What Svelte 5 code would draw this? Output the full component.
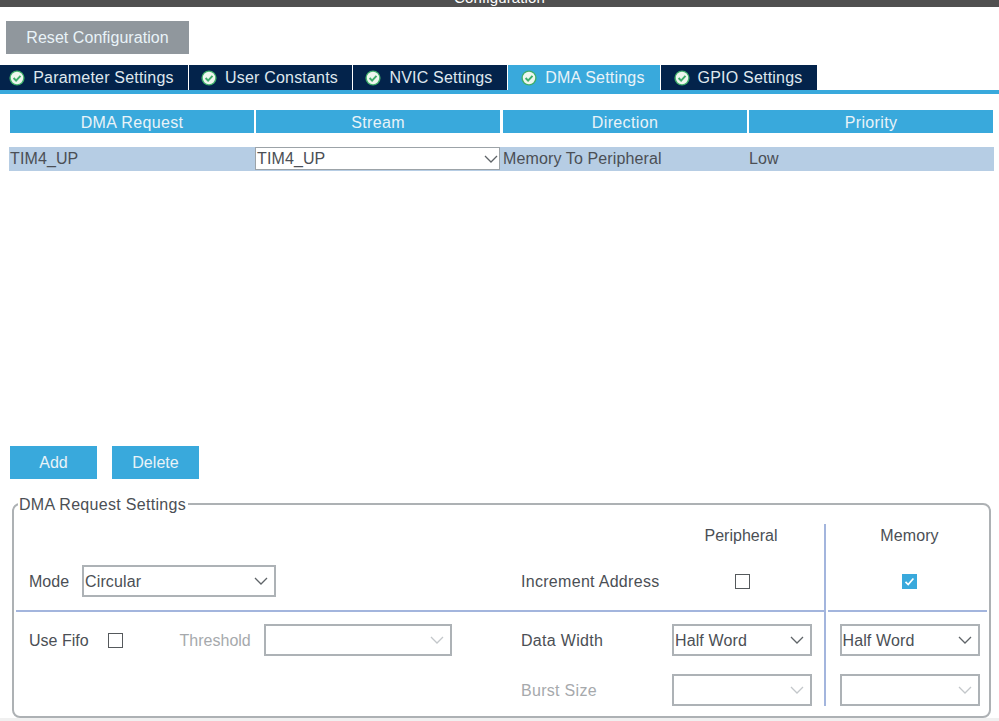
<script>
  const tabs = [
    { label: 'Parameter Settings', width: 188 },
    { label: 'User Constants', width: 163 },
    { label: 'NVIC Settings', width: 154 },
    { label: 'DMA Settings', width: 152, active: true },
    { label: 'GPIO Settings', width: 156 }
  ];
  const columns = ['DMA Request', 'Stream', 'Direction', 'Priority'];
</script>

{#snippet chevron()}
  <svg class="chevron" width="14" height="8" viewBox="0 0 14 8"><path d="M1 1l6 6 6-6" /></svg>
{/snippet}

{#snippet select(value, cls)}
  <div class="select {cls}">
    <span>{value}</span>
    {@render chevron()}
  </div>
{/snippet}

<div class="page">
  <div class="titlebar"><span>Configuration</span></div>

  <button class="reset">Reset Configuration</button>

  <div class="tabs">
    {#each tabs as tab}
      <div class="tab" class:active={tab.active} style="width: {tab.width}px">
        <svg class="ok" width="16" height="16" viewBox="0 0 16 16">
          <circle cx="8" cy="8" r="7.6" fill="#3fae6b" />
          <circle cx="8" cy="8" r="6.2" fill="#eef7ee" />
          <path d="M4.6 8l2.5 2.6 4.4-4.7" fill="none" stroke="#3fae6b" stroke-width="2" />
        </svg>
        <span>{tab.label}</span>
      </div>
    {/each}
  </div>

  <div class="table">
    <div class="thead">
      {#each columns as col}
        <div class="th">{col}</div>
      {/each}
    </div>
    <div class="row">
      <div class="td">TIM4_UP</div>
      <div class="td">{@render select('TIM4_UP', 'stream')}</div>
      <div class="td">Memory To Peripheral</div>
      <div class="td">Low</div>
    </div>
  </div>

  <div class="actions">
    <button class="action">Add</button>
    <button class="action">Delete</button>
  </div>

  <fieldset class="settings">
    <legend>DMA Request Settings</legend>
    <div class="cfg">
      <div class="cfg-main">
        <div class="upper">
          <div class="peripheral-head">Peripheral</div>
          <div class="line">
            <div class="side">
              <span class="lbl">Mode</span>
              {@render select('Circular', 'mode')}
            </div>
            <div class="side right">
              <span class="lbl wide">Increment Address</span>
              <div class="cell"><span class="check"></span></div>
            </div>
          </div>
        </div>
        <div class="lower">
          <div class="line">
            <div class="side">
              <span class="lbl fifo">Use Fifo</span>
              <span class="check"></span>
              <span class="lbl thr muted">Threshold</span>
              {@render select('', 'threshold off')}
            </div>
            <div class="side right">
              <span class="lbl wide">Data Width</span>
              <div class="cell">{@render select('Half Word', 'small')}</div>
            </div>
          </div>
          <div class="line">
            <div class="side"></div>
            <div class="side right">
              <span class="lbl wide muted">Burst Size</span>
              <div class="cell">{@render select('', 'small off')}</div>
            </div>
          </div>
        </div>
      </div>
      <div class="cfg-memory">
        <div class="upper">
          <div class="memory-head">Memory</div>
          <div class="line center">
            <span class="check on">
              <svg width="15" height="15" viewBox="0 0 15 15"><path d="M3.5 7.8l2.7 2.7 5.2-6" fill="none" stroke="#fff" stroke-width="1.7" /></svg>
            </span>
          </div>
        </div>
        <div class="lower">
          <div class="line center">{@render select('Half Word', 'small')}</div>
          <div class="line center">{@render select('', 'small off')}</div>
        </div>
      </div>
    </div>
  </fieldset>
</div>

<style>
  :global(body) {
    background: #f0f0f0;
    overflow: hidden;
  }

  .page {
    height: 718px;
    overflow: hidden;
    background: #fff;
    font-family: "Liberation Sans", Arial, sans-serif;
    font-size: 16px;
    color: #4b4f55;
    letter-spacing: 0.12px;
  }

  .titlebar {
    height: 7px;
    background: #505050;
    overflow: hidden;
    text-align: center;
    color: #fff;
    font-size: 15px;
  }

  .titlebar span {
    display: block;
    height: 7px;
    line-height: 5px;
    transform: translateY(-5px);
  }

  button {
    font: inherit;
    letter-spacing: 0.05px;
    color: #e9f3f8;
    border: none;
    padding: 0;
  }

  .reset {
    display: block;
    width: 183px;
    height: 33px;
    margin: 14px 0 0 6px;
    background: #90979d;
  }

  /* tabs */
  .tabs {
    display: flex;
    gap: 1px;
    height: 25px;
    margin-top: 11px;
    border-bottom: 4px solid #39a9dc;
  }

  .tab {
    flex: none;
    box-sizing: border-box;
    display: flex;
    align-items: center;
    justify-content: center;
    gap: 8px;
    height: 25px;
    padding-right: 2px;
    background: #03234b;
    color: #dfe7ee;
    letter-spacing: 0.2px;
  }

  .tab:first-child {
    padding-right: 5px;
  }

  .tab.active {
    background: #39a9dc;
    color: #e9f3f8;
  }

  /* table */
  .table {
    margin: 16px 5px 0 9px;
  }

  .thead {
    display: grid;
    grid-template-columns: 246px 247px 246px 244px;
    padding-left: 1px;
  }

  .th {
    width: 244px;
    height: 23px;
    line-height: 25px;
    text-align: center;
    background: #39a9dc;
    color: #e9f3f8;
    letter-spacing: 0.35px;
  }

  .row {
    display: grid;
    grid-template-columns: 246px 247px 246px 246px;
    height: 24px;
    margin-top: 14px;
    background: #b6cde4;
    line-height: 23px;
  }

  .td {
    padding-left: 1px;
    white-space: nowrap;
  }

  .td:nth-child(2) {
    padding-left: 0;
  }

  /* selects */
  .select {
    box-sizing: border-box;
    display: flex;
    align-items: center;
    justify-content: space-between;
    height: 32px;
    padding: 2px 6px 0 1px;
    background: #fff;
    border: 2px solid #adb2b6;
    letter-spacing: 0.12px;
  }

  .select.off .chevron path {
    stroke: #c3c7ca;
  }

  .select .chevron {
    margin-top: -2px;
  }

  .select.stream {
    width: 245px;
    height: 23px;
    padding: 0 1px 0 1px;
    border-width: 1px;
    border-color: #9ca3a8;
  }

  .select.stream .chevron {
    margin-top: 0;
  }

  .select.mode {
    width: 194px;
  }

  .select.threshold {
    width: 188px;
  }

  .select.small {
    width: 140px;
  }

  .chevron {
    flex: none;
  }

  .chevron path {
    fill: none;
    stroke: #5f6468;
    stroke-width: 1.3;
  }

  /* add / delete */
  .actions {
    display: flex;
    gap: 15px;
    margin: 275px 0 0 10px;
  }

  .action {
    width: 87px;
    height: 33px;
    background: #39a9dc;
  }

  /* request settings */
  .settings {
    box-sizing: border-box;
    height: 225px;
    margin: 14px 8px 0 12px;
    padding: 9px 0 0 2px;
    border: 2px solid #adb1b4;
    border-radius: 8px;
    min-width: 0;
  }

  legend {
    padding: 2px 2px 0 1px;
    margin-left: 2px;
    line-height: 20px;
    letter-spacing: 0.3px;
  }

  .cfg {
    display: grid;
    grid-template-columns: 809px 162px;
  }

  .upper {
    height: 86px;
    border-bottom: 2px solid #a3b5dd;
  }

  .lower {
    padding-top: 12px;
  }

  .line {
    display: flex;
    align-items: center;
    height: 32px;
  }

  .lower .line + .line {
    margin-top: 18px;
  }

  .line.center {
    justify-content: center;
    padding-left: 4px;
  }

  .side {
    display: flex;
    align-items: center;
    flex: none;
    width: 505px;
    padding-left: 13px;
    box-sizing: border-box;
    letter-spacing: 0;
  }

  .side.right {
    width: 304px;
    padding-left: 0;
  }

  .lbl {
    flex: none;
    margin-right: 13px;
    padding-top: 2px;
  }

  .lbl.fifo {
    margin-right: 19px;
  }

  .lbl.thr {
    margin-left: 57px;
  }

  .lbl.wide {
    width: 151px;
    margin-right: 0;
    letter-spacing: 0.3px;
  }

  .muted {
    color: #a6a9ac;
  }

  .cell {
    flex: none;
    width: 140px;
    display: flex;
    justify-content: center;
  }

  .peripheral-head {
    height: 41px;
    margin-left: 655px;
    width: 140px;
    line-height: 24px;
    text-align: center;
    letter-spacing: 0;
  }

  .memory-head {
    height: 41px;
    padding-left: 4px;
    line-height: 24px;
    text-align: center;
  }

  .cfg-memory {
    padding-left: 2px;
    border-left: 2px solid #a3b5dd;
    margin-left: -1px;
    box-sizing: border-box;
    height: 182px;
  }

  .check {
    box-sizing: border-box;
    display: inline-block;
    flex: none;
    width: 15px;
    height: 15px;
    border: 1.5px solid #55595c;
    background: #fff;
  }

  .check.on {
    border: none;
    background: #39a9dc;
  }

  .check.on svg {
    display: block;
  }
</style>
